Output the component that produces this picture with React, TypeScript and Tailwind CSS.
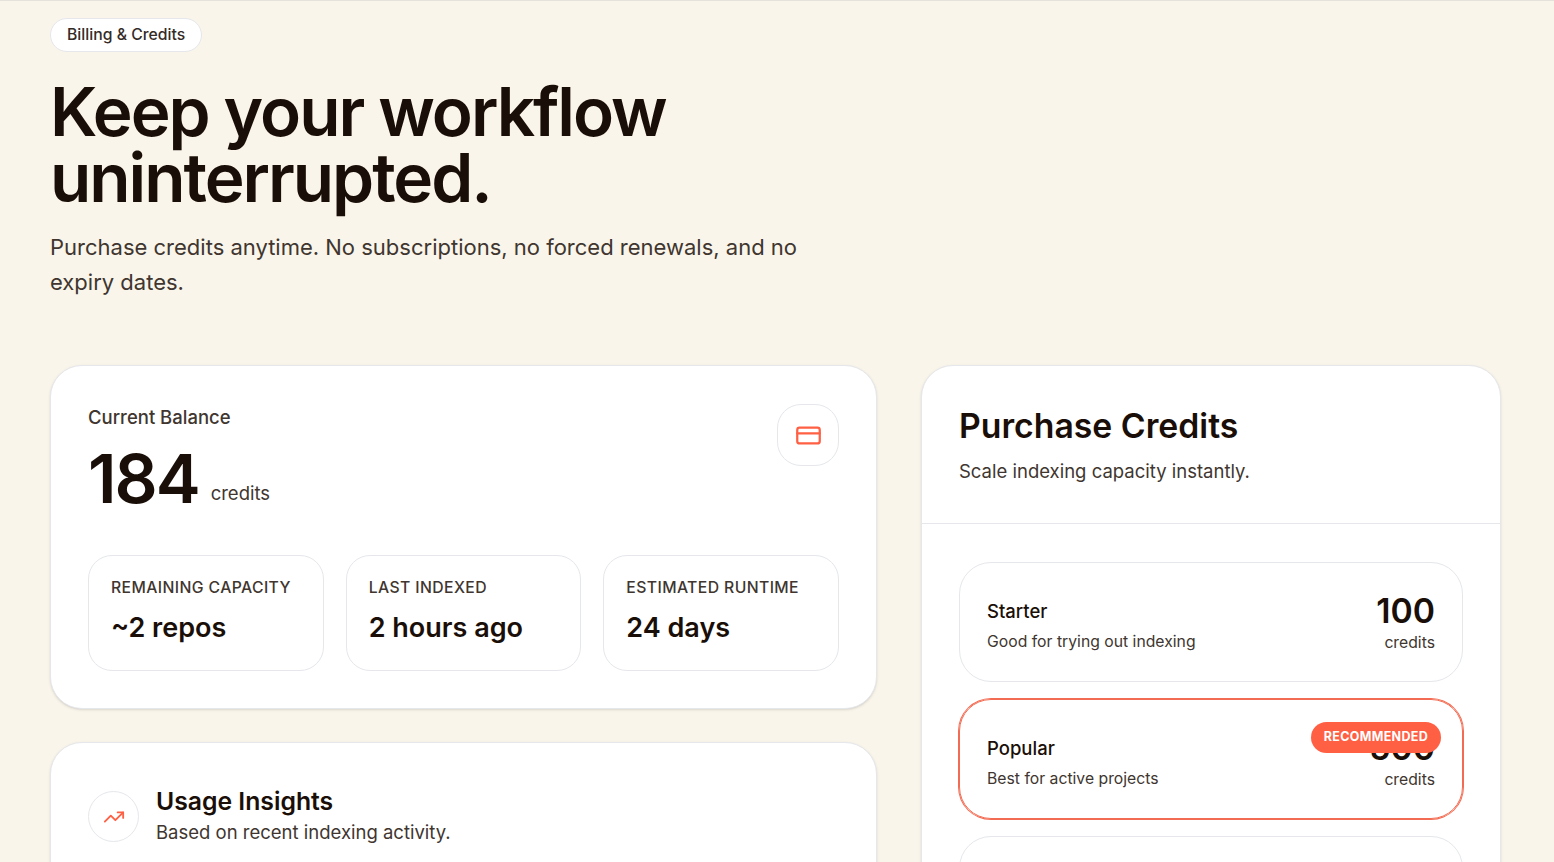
import { CreditCard, TrendingUp } from "lucide-react"

const stats = [
  { label: "Remaining Capacity", value: "~2 repos" },
  { label: "Last Indexed", value: "2 hours ago" },
  { label: "Estimated Runtime", value: "24 days" },
]

const plans = [
  { name: "Starter", description: "Good for trying out indexing", credits: 100, recommended: false },
  { name: "Popular", description: "Best for active projects", credits: 500, recommended: true },
  { name: "Pro", description: "Built for larger teams", credits: 1000, recommended: false },
]

function PageHeader() {
  return (
    <header className="flex flex-col items-start">
      <span className="flex h-[34px] items-center rounded-full border border-[#e5e7eb] bg-white px-4 text-[15.75px] font-medium text-[#342b26]">
        Billing &amp; Credits
      </span>
      <h1 className="mt-[27px] w-[760px] text-[67.5px] leading-[66px] font-semibold tracking-[-0.03em] text-[#1a0f08]">
        Keep your workflow uninterrupted.
      </h1>
      <p className="mt-[19px] w-[756px] text-[22px] leading-[35px] text-[#40362f]">
        Purchase credits anytime. No subscriptions, no forced renewals, and no expiry dates.
      </p>
    </header>
  )
}

function BalanceCard() {
  return (
    <section className="h-[344px] rounded-[32px] border border-[#e5e7eb] bg-white px-[37px] pt-[38px] shadow-sm">
      <div className="flex items-start justify-between">
        <div>
          <p className="text-[18.5px] leading-[27px] font-medium text-[#40362f]">Current Balance</p>
          <div className="mt-[15px] flex items-end gap-3">
            <span className="text-[67.5px] leading-[66px] font-semibold tracking-[-0.03em] text-[#1a0f08]">184</span>
            <span className="pb-[5px] text-[18.5px] leading-[27px] text-[#40362f]">credits</span>
          </div>
        </div>
        <div className="flex size-[62px] items-center justify-center rounded-[24px] border border-[#e5e7eb]">
          <CreditCard size={27} className="text-[#ff6044]" />
        </div>
      </div>
      <div className="mt-[43px] grid grid-cols-3 gap-[22px]">
        {stats.map((stat) => (
          <div key={stat.label} className="h-[116px] rounded-[24px] border border-[#e5e7eb] px-[22px] pt-[21px]">
            <p className="text-[15.75px] leading-[22px] font-medium tracking-[0.025em] whitespace-nowrap text-[#40362f] uppercase">
              {stat.label}
            </p>
            <p className="mt-[11px] text-[27px] leading-[36px] font-semibold text-[#1a0f08]">{stat.value}</p>
          </div>
        ))}
      </div>
    </section>
  )
}

function UsageCard() {
  return (
    <section className="h-[400px] rounded-[32px] border border-[#e5e7eb] bg-white px-[37px] pt-[42px] shadow-sm">
      <div className="flex items-center gap-[17px]">
        <div className="flex size-[51px] items-center justify-center rounded-full border border-[#e5e7eb]">
          <TrendingUp size={22} className="text-[#ff6044]" />
        </div>
        <div>
          <h2 className="text-[24.75px] leading-[32px] font-semibold text-[#1a0f08]">Usage Insights</h2>
          <p className="text-[18.5px] leading-[31px] text-[#40362f]">Based on recent indexing activity.</p>
        </div>
      </div>
    </section>
  )
}

function PurchaseCard() {
  return (
    <section className="h-[777px] rounded-[32px] border border-[#e5e7eb] bg-white shadow-sm">
      <div className="h-[158px] border-b border-[#e5e7eb] px-[37px] pt-[39px]">
        <h2 className="text-[33.75px] leading-[42px] font-semibold text-[#1a0f08]">Purchase Credits</h2>
        <p className="mt-[11px] text-[18.5px] leading-[27px] text-[#40362f]">Scale indexing capacity instantly.</p>
      </div>
      <div className="flex flex-col gap-[17px] px-[37px] pt-[38px]">
        {plans.map((plan) => (
          <div
            key={plan.name}
            className={
              plan.recommended
                ? "relative flex h-[120px] items-center justify-between rounded-[32px] border border-[#f36b52] px-[27px] ring-1 ring-[#f36b52]"
                : "relative flex h-[120px] items-center justify-between rounded-[32px] border border-[#e5e7eb] px-[27px]"
            }
          >
            <div className="pt-[7px]">
              <p className="text-[18.5px] leading-[27px] font-medium text-[#1a0f08]">{plan.name}</p>
              <p className="mt-[5px] text-[15.75px] leading-[24px] text-[#40362f]">{plan.description}</p>
            </div>
            <div className="pt-[2px] text-right">
              <p className="text-[33.75px] leading-[38px] font-semibold text-[#1a0f08]">{plan.credits}</p>
              <p className="mt-[1px] text-[15.75px] leading-[24px] text-[#40362f]">credits</p>
            </div>
            {plan.recommended && (
              <span className="absolute top-[22px] right-[21px] flex h-[31px] items-center rounded-full bg-[#ff6044] px-[13px] text-[12.5px] font-bold tracking-[0.025em] text-white uppercase">
                Recommended
              </span>
            )}
          </div>
        ))}
      </div>
    </section>
  )
}

export default function App() {
  return (
    <main className="h-[862px] overflow-hidden border-t border-[#e5e2dc] bg-[#faf5eb] px-[50px] pt-[17px] font-[Inter,sans-serif]">
      <PageHeader />
      <div className="mt-[65px] grid grid-cols-[827px_580px] gap-[44px]">
        <div className="flex flex-col gap-[33px]">
          <BalanceCard />
          <UsageCard />
        </div>
        <PurchaseCard />
      </div>
    </main>
  )
}
